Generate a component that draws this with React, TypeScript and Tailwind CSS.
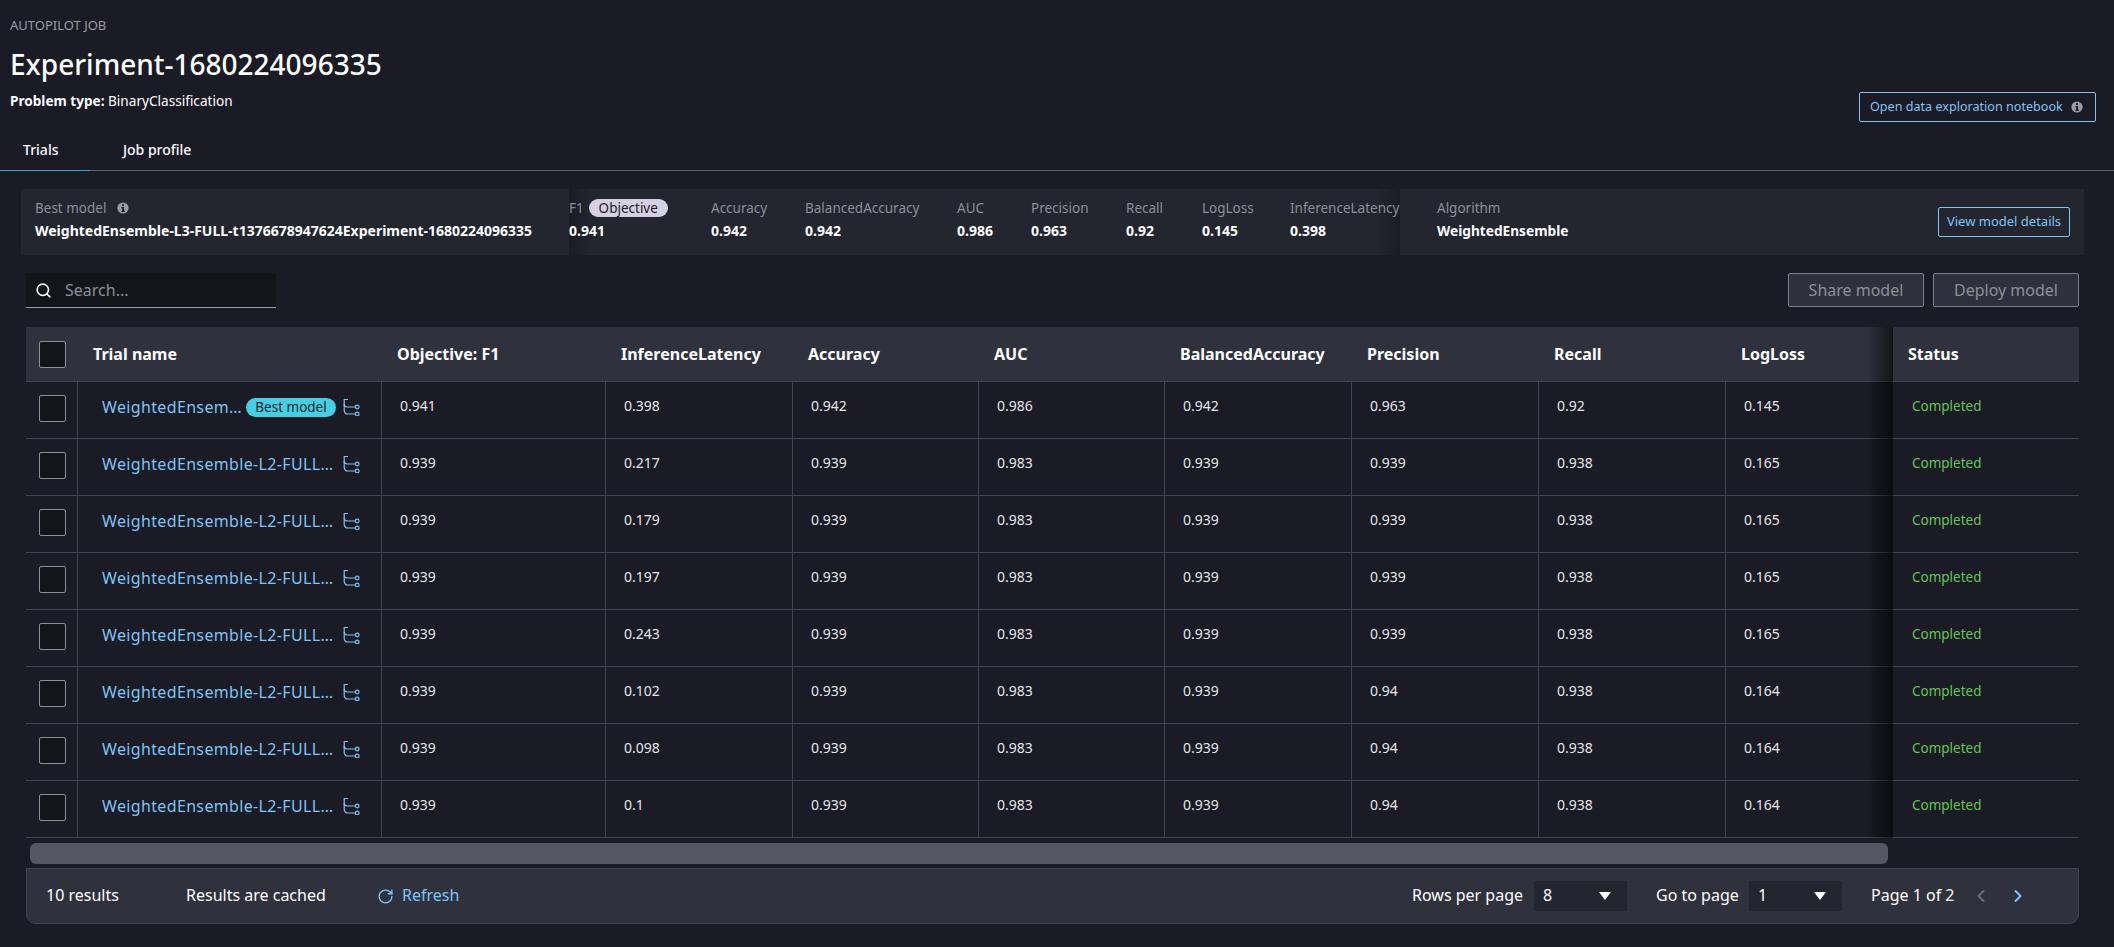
import { ChevronLeft, ChevronRight, RotateCw, Search } from 'lucide-react';

const metrics = [
  { label: 'Accuracy', value: '0.942', width: 'w-[94px]' },
  { label: 'BalancedAccuracy', value: '0.942', width: 'w-[152px]' },
  { label: 'AUC', value: '0.986', width: 'w-[74px]' },
  { label: 'Precision', value: '0.963', width: 'w-[95px]' },
  { label: 'Recall', value: '0.92', width: 'w-[76px]' },
  { label: 'LogLoss', value: '0.145', width: 'w-[88px]' },
  { label: 'InferenceLatency', value: '0.398', width: 'w-[110px]' },
];

const columns = ['Objective: F1', 'InferenceLatency', 'Accuracy', 'AUC', 'BalancedAccuracy', 'Precision', 'Recall', 'LogLoss'];

const trials = [
  ['0.941', '0.398', '0.942', '0.986', '0.942', '0.963', '0.92', '0.145'],
  ['0.939', '0.217', '0.939', '0.983', '0.939', '0.939', '0.938', '0.165'],
  ['0.939', '0.179', '0.939', '0.983', '0.939', '0.939', '0.938', '0.165'],
  ['0.939', '0.197', '0.939', '0.983', '0.939', '0.939', '0.938', '0.165'],
  ['0.939', '0.243', '0.939', '0.983', '0.939', '0.939', '0.938', '0.165'],
  ['0.939', '0.102', '0.939', '0.983', '0.939', '0.94', '0.938', '0.164'],
  ['0.939', '0.098', '0.939', '0.983', '0.939', '0.94', '0.938', '0.164'],
  ['0.939', '0.1', '0.939', '0.983', '0.939', '0.94', '0.938', '0.164'],
];

const gridCols = 'grid grid-cols-[51px_304px_224px_187px_186px_186px_187px_187px_187px_168px_186px]';

function InfoIcon() {
  return (
    <svg width="12" height="12" viewBox="0 0 12 12" className="shrink-0">
      <circle cx="6" cy="6" r="5.6" fill="#9a9ca5" />
      <rect x="5" y="2.2" width="2" height="1.8" fill="#1a1b24" />
      <path d="M4.4 5h2.6v3.8h.8V10H4.4V8.8h.8V6.2h-.8z" fill="#1a1b24" />
    </svg>
  );
}

function LineageIcon() {
  return (
    <svg width="18" height="18" viewBox="0 0 18 18" fill="none" stroke="#7cc5f5" strokeWidth="1.2" className="shrink-0">
      <path d="M5 1.5H1.2V12.5a3.5 3.5 0 0 0 3.5 3.5H12" />
      <path d="M1.2 6a3 3 0 0 0 3 3H12" />
      <circle cx="14.2" cy="9" r="1.8" />
      <circle cx="14.2" cy="16" r="1.8" />
    </svg>
  );
}

function Checkbox() {
  return <div className="h-[27px] w-[27px] rounded-[2px] border border-[#8d8f98] bg-[#14151a]" />;
}

function PageSelect({ value }: { value: string }) {
  return (
    <div className="flex h-[30px] w-[93px] items-center justify-between bg-[#23252f] pl-[9px] pr-[16px] text-[16px]">
      <span className="pb-[2px]">{value}</span>
      <span className="h-0 w-0 border-x-[6px] border-t-[8px] border-x-transparent border-t-white" />
    </div>
  );
}

export default function App() {
  return (
    <div className="h-[947px] overflow-hidden bg-[#1a1b24] font-['Noto_Sans',sans-serif] text-white">
      {/* Job header */}
      <div className="flex h-[122px] items-end justify-between pl-[10px] pr-[18px]">
        <div className="self-start pt-[16px]">
          <div className="text-[13px] leading-[18px] text-[#9a9ca5]">AUTOPILOT JOB</div>
          <h1 className="mt-[11px] text-[28px] font-medium leading-[38px]">Experiment-1680224096335</h1>
          <div className="mt-[9px] text-[13.6px] leading-[18px]">
            <b>Problem type:</b> BinaryClassification
          </div>
        </div>
        <button className="flex h-[30px] w-[237px] items-center justify-between rounded-[2px] border border-[#7cc5f5] pl-[10px] pr-[12px] text-[12.6px] text-[#7cc5f5]">
          Open data exploration notebook
          <InfoIcon />
        </button>
      </div>

      {/* Tabs */}
      <div className="flex h-[49px] border-b border-[#5f616a] text-[14px]">
        <div className="flex h-[49px] w-[90px] items-center border-b border-[#2ea3d6] pl-[23px] pt-[6px] font-medium">Trials</div>
        <div className="flex items-center pl-[33px] pt-[6px] font-medium">Job profile</div>
      </div>

      {/* Best model summary */}
      <div className="ml-[21px] mr-[30px] mt-[18px] flex h-[66px] bg-[#23252f] text-[13.5px]">
        <div className="w-[548px] pl-[14px] pt-[9px]">
          <div className="flex h-[20px] items-center gap-[11px] text-[#8d8f98]">
            Best model <InfoIcon />
          </div>
          <div className="mt-[3px] whitespace-nowrap text-[14px] font-bold leading-[20px]">WeightedEnsemble-L3-FULL-t1376678947624Experiment-1680224096335</div>
        </div>
        <div className="relative flex w-[831px] pt-[9px]">
          <div className="absolute inset-y-0 left-0 w-[22px] bg-gradient-to-r from-[#1a1b24] to-transparent" />
          <div className="absolute inset-y-0 right-0 w-[22px] bg-gradient-to-l from-[#1a1b24] to-transparent" />
          <div className="relative w-[142px]">
            <div className="flex h-[20px] items-center gap-[5px] text-[#8d8f98]">
              F1
              <span className="flex h-[18px] w-[79px] items-center justify-center rounded-full bg-[#d5d1e3] text-[#1a1b24]">Objective</span>
            </div>
            <div className="mt-[3px] text-[14px] font-bold leading-[20px]">0.941</div>
          </div>
          {metrics.map((m) => (
            <div key={m.label} className={`relative ${m.width}`}>
              <div className="flex h-[20px] items-center whitespace-nowrap text-[#8d8f98]">{m.label}</div>
              <div className="mt-[3px] text-[14px] font-bold leading-[20px]">{m.value}</div>
            </div>
          ))}
        </div>
        <div className="flex flex-1 items-center justify-between pl-[37px] pr-[14px]">
          <div className="self-start pt-[9px]">
            <div className="flex h-[20px] items-center text-[#8d8f98]">Algorithm</div>
            <div className="mt-[3px] text-[13.7px] font-bold leading-[20px]">WeightedEnsemble</div>
          </div>
          <button className="h-[30px] w-[132px] rounded-[2px] border border-[#7cc5f5] text-[13px] text-[#7cc5f5]">View model details</button>
        </div>
      </div>

      {/* Search and actions */}
      <div className="ml-[26px] mr-[35px] mt-[18px] flex h-[35px] justify-between">
        <div className="flex w-[250px] items-center gap-[13px] border-b border-[#9a9ca5] bg-[#14151a] pl-[9px] text-[16px] text-[#8d8f98]">
          <Search size={17} strokeWidth={2.2} className="text-white" />
          Search...
        </div>
        <div className="flex gap-[9px] pb-[1px] text-[16px] text-[#8d8f98]">
          <button className="w-[136px] rounded-[2px] border border-[#7d7f88] bg-[#2f303b]">Share model</button>
          <button className="w-[146px] rounded-[2px] border border-[#7d7f88] bg-[#2f303b]">Deploy model</button>
        </div>
      </div>

      {/* Trials table */}
      <div className="relative ml-[26px] mr-[35px] mt-[19px]">
        <div className={`${gridCols} h-[55px] items-center border-b border-[#42444f] bg-[#2f313c] text-[16px] font-bold`}>
          <div className="pl-[13px]"><Checkbox /></div>
          <div className="pl-[16px]">Trial name</div>
          {columns.map((c) => (
            <div key={c} className="whitespace-nowrap pl-[16px]">{c}</div>
          ))}
          <div className="pl-[15px]">Status</div>
        </div>
        {trials.map((row, i) => (
          <div key={i} className={`${gridCols} h-[57px] border-b border-[#42444f] text-[14px] text-[#e6e6e8]`}>
            <div className="flex items-center pb-[3px] pl-[13px]"><Checkbox /></div>
            <div className="flex items-center border-l border-[#42444f] pb-[6px] pl-[24px] pr-[20px]">
              <span className={`truncate text-[16px] tracking-[0.35px] text-[#7cc5f5] ${i === 0 ? 'w-[140px]' : 'w-[234px]'}`}>
                WeightedEnsemble-L{i === 0 ? 3 : 2}-FULL-t1376678947624
              </span>
              {i === 0 && (
                <span className="ml-[4px] flex h-[19px] w-[90px] shrink-0 items-center justify-center rounded-full bg-[#44d0e4] text-[13.5px] text-[#1a1b24]">
                  Best model
                </span>
              )}
              <span className="ml-auto"><LineageIcon /></span>
            </div>
            {row.map((v, j) => (
              <div key={j} className="flex items-center border-l border-[#42444f] pb-[10px] pl-[18px]">{v}</div>
            ))}
            <div className="flex items-center pb-[8px] pl-[19px] text-[13.5px] text-[#62c554]">Completed</div>
          </div>
        ))}
        <div className="absolute bottom-0 right-[186px] top-0 w-[26px] bg-gradient-to-r from-transparent to-black/60" />
      </div>

      {/* Scroll bar */}
      <div className="ml-[30px] mt-[5px] h-[21px] w-[1858px] rounded-[6px] bg-[#555765]" />

      {/* Pagination footer */}
      <div className="ml-[26px] mr-[35px] mt-[4px] flex h-[56px] items-center justify-between rounded-b-[10px] border border-[#42444f] bg-[#2f313c] pl-[19px] pr-[50px] text-[16px]">
        <div className="flex items-center">
          <span className="w-[140px] pb-[2px]">10 results</span>
          <span className="w-[191px] pb-[2px]">Results are cached</span>
          <span className="flex items-center gap-[8px] text-[#7cc5f5]">
            <RotateCw size={17} strokeWidth={2} />
            <span className="pb-[2px]">Refresh</span>
          </span>
        </div>
        <div className="flex items-center">
          <span className="w-[122px] pb-[2px]">Rows per page</span>
          <PageSelect value="8" />
          <span className="ml-[29px] w-[93px] pb-[2px]">Go to page</span>
          <PageSelect value="1" />
          <span className="ml-[29px] w-[88px] whitespace-nowrap pb-[2px]">Page 1 of 2</span>
          <ChevronLeft size={20} strokeWidth={2.4} className="ml-[12px] text-[#6c6e78]" />
          <ChevronRight size={20} strokeWidth={2.4} className="ml-[17px] text-[#7cc5f5]" />
        </div>
      </div>
    </div>
  );
}
